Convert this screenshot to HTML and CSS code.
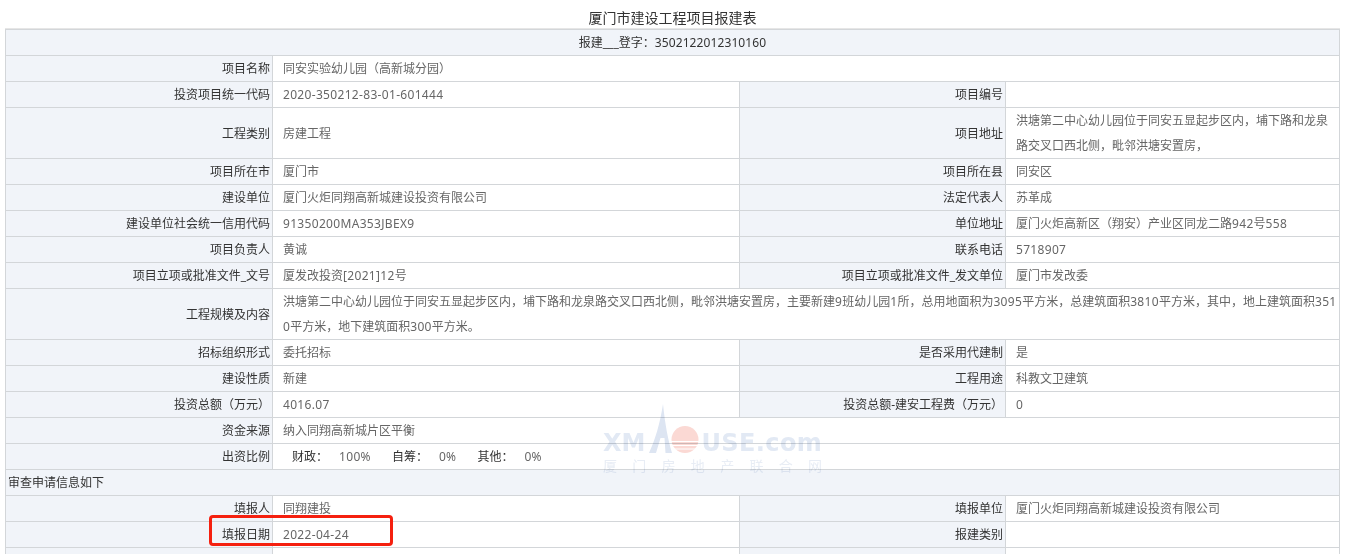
FILE: index.html
```html
<!DOCTYPE html>
<html lang="zh">
<head>
<meta charset="utf-8">
<title>厦门市建设工程项目报建表</title>
<link rel="stylesheet" href="styles.css">
</head>
<body>
<div class="page">
<h1 class="title">厦门市建设工程项目报建表</h1>
<table class="form">
<colgroup><col class="c1"><col class="c2"><col class="c3"><col class="c4"></colgroup>
<tbody>
<tr><td class="head" colspan="4">报建___登字：<span class="code">3502122012310160</span></td></tr>
<tr><th>项目名称</th><td colspan="3">同安实验幼儿园（高新城分园）</td></tr>
<tr><th>投资项目统一代码</th><td><span class="num">2020-350212-83-01-601444</span></td><th>项目编号</th><td></td></tr>
<tr><th>工程类别</th><td>房建工程</td><th>项目地址</th><td>洪塘第二中心幼儿园位于同安五显起步区内，埔下路和龙泉路交叉口西北侧，毗邻洪塘安置房，</td></tr>
<tr><th>项目所在市</th><td>厦门市</td><th>项目所在县</th><td>同安区</td></tr>
<tr><th>建设单位</th><td>厦门火炬同翔高新城建设投资有限公司</td><th>法定代表人</th><td>苏革成</td></tr>
<tr><th>建设单位社会统一信用代码</th><td><span class="num">91350200MA353JBEX9</span></td><th>单位地址</th><td>厦门火炬高新区（翔安）产业区同龙二路<span class="num">942</span>号<span class="num">558</span></td></tr>
<tr><th>项目负责人</th><td>黄诚</td><th>联系电话</th><td><span class="num">5718907</span></td></tr>
<tr><th>项目立项或批准文件_文号</th><td>厦发改投资<span class="num">[2021]12</span>号</td><th>项目立项或批准文件_发文单位</th><td>厦门市发改委</td></tr>
<tr><th>工程规模及内容</th><td colspan="3">洪塘第二中心幼儿园位于同安五显起步区内，埔下路和龙泉路交叉口西北侧，毗邻洪塘安置房，主要新建<span class="num">9</span>班幼儿园<span class="num">1</span>所，总用地面积为<span class="num">3095</span>平方米，总建筑面积<span class="num">3810</span>平方米，其中，地上建筑面积<span class="num">351</span><span class="num">0</span>平方米，地下建筑面积<span class="num">300</span>平方米。</td></tr>
<tr><th>招标组织形式</th><td>委托招标</td><th>是否采用代建制</th><td>是</td></tr>
<tr><th>建设性质</th><td>新建</td><th>工程用途</th><td>科教文卫建筑</td></tr>
<tr><th>投资总额（万元）</th><td><span class="num">4016.07</span></td><th>投资总额-建安工程费（万元）</th><td><span class="num">0</span></td></tr>
<tr><th>资金来源</th><td colspan="3">纳入同翔高新城片区平衡</td></tr>
<tr><th>出资比例</th><td colspan="3"><span class="ratio"><span class="rk">财政：</span><span class="num">100%</span></span><span class="ratio"><span class="rk">自筹：</span><span class="num">0%</span></span><span class="ratio"><span class="rk">其他：</span><span class="num">0%</span></span></td></tr>
<tr><td class="section" colspan="4">审查申请信息如下</td></tr>
<tr><th>填报人</th><td>同翔建投</td><th>填报单位</th><td>厦门火炬同翔高新城建设投资有限公司</td></tr>
<tr><th>填报日期</th><td><span class="num">2022-04-24</span></td><th>报建类别</th><td></td></tr>
<tr><th></th><td></td><th></th><td></td></tr>
</tbody>
</table>
<div class="mark" aria-hidden="true">
<div class="mark-top"><span class="mark-x">XM</span><svg class="mark-logo" width="56" height="50" viewBox="0 0 56 50"><path d="M4 49 C10 36 15 20 18 0 C20 20 23 36 27 49 L20.500 49 L19.500 34 L15.500 34 L11 49Z" fill="#dde5f2"/><circle cx="40" cy="35.500" r="13.500" fill="#fbd9d4"/><path d="M26 37.500h28M26 41.500h28M28 45h24" stroke="#fff" stroke-width="1"/></svg><span class="mark-y">USE.com</span></div>
<div class="mark-sub"><span>厦</span><span>门</span><span>房</span><span>地</span><span>产</span><span>联</span><span>合</span><span>网</span></div>
</div>
<div class="highlight"></div>
</div>
</body>
</html>
```
FILE: styles.css
```css
html, body { margin: 0; padding: 0; height: 554px; overflow: hidden; background: #fff; }
body { font: 12px/25px "Noto Sans", "Noto Sans CJK SC", sans-serif; color: #333; }
.page { position: relative; height: 554px; overflow: hidden; padding: 0 5px; box-sizing: border-box; width: 1345px; }
.title { margin: 0; height: 29px; padding-top: 6px; box-sizing: border-box; text-align: center; font-size: 14px; font-weight: 400; line-height: 23px; color: #333; }
.form { width: 1334px; table-layout: fixed; border-collapse: collapse; box-shadow: 0 -1px 0 #e6e6e6; }
.c1 { width: 267px; }
.c2 { width: 467px; }
.c3 { width: 266px; }
.c4 { width: 334px; }
.form th, .form td { border: 1px solid #d3d6d9; padding: 0 2px; height: 25px; box-sizing: content-box; line-height: 25px; font-size: 12px; font-weight: 400; word-break: break-all; }
.form th { background: #f1f4f9; text-align: right; color: #333; }
.form td { background: #fff; color: #666; padding: 0 2px 0 10px; }
.form td.head { background: #f1f4f9; text-align: center; color: #333; padding: 0 2px; }
.form td.section { background: #f1f4f9; color: #333; padding: 0 2px; }
.num { letter-spacing: .32px; }
.code { letter-spacing: .1px; }
.ratio { margin-right: 21px; }
.ratio:first-child { margin-left: 9px; }
.rk { margin-right: 11px; color: #333; }
.mark { position: absolute; left: 603px; top: 404px; width: 222px; height: 72px; mix-blend-mode: multiply; pointer-events: none; }
.mark-top { display: flex; align-items: flex-end; height: 50px; font: 700 24px/24px "DejaVu Sans", sans-serif; color: #e2e9f4; }
.mark-x, .mark-y { margin-bottom: -1px; }
.mark-y { letter-spacing: .4px; }
.mark-logo { flex: none; }
.mark-sub { display: flex; justify-content: space-between; width: 219px; margin-top: 3px; font: 14px/16px "Noto Sans CJK SC", sans-serif; color: #e8edf5; }
.highlight { position: absolute; left: 209px; top: 515px; width: 184px; height: 31px; box-sizing: border-box; border: 3px solid #f5200f; border-radius: 4px; }
```
